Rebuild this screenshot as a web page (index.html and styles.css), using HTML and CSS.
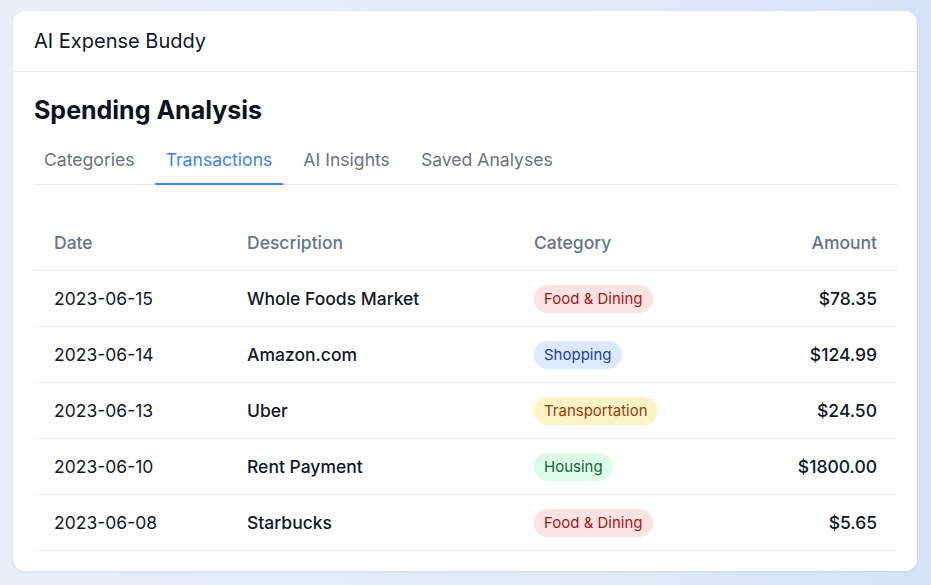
FILE: index.html
```html
<!DOCTYPE html>
<html lang="en">
<head>
    <meta charset="UTF-8">
    <title>AI Expense Buddy</title>
    <link rel="stylesheet" href="styles.css">
</head>
<body>
<div class="card">
    <div class="card-header">AI Expense Buddy</div>
    <div class="card-body">
        <h1 class="title">Spending Analysis</h1>
        <div class="tabs">
            <div class="tab">Categories</div>
            <div class="tab active">Transactions</div>
            <div class="tab">AI Insights</div>
            <div class="tab">Saved Analyses</div>
        </div>
        <table class="tx-table">
            <thead>
            <tr>
                <th class="col-date">Date</th>
                <th class="col-desc">Description</th>
                <th class="col-cat">Category</th>
                <th class="amount">Amount</th>
            </tr>
            </thead>
            <tbody>
            <tr>
                <td>2023-06-15</td>
                <td class="desc">Whole Foods Market</td>
                <td><span class="badge food">Food &amp; Dining</span></td>
                <td class="amount">$78.35</td>
            </tr>
            <tr>
                <td>2023-06-14</td>
                <td class="desc">Amazon.com</td>
                <td><span class="badge shopping">Shopping</span></td>
                <td class="amount">$124.99</td>
            </tr>
            <tr>
                <td>2023-06-13</td>
                <td class="desc">Uber</td>
                <td><span class="badge transport">Transportation</span></td>
                <td class="amount">$24.50</td>
            </tr>
            <tr>
                <td>2023-06-10</td>
                <td class="desc">Rent Payment</td>
                <td><span class="badge housing">Housing</span></td>
                <td class="amount">$1800.00</td>
            </tr>
            <tr>
                <td>2023-06-08</td>
                <td class="desc">Starbucks</td>
                <td><span class="badge food">Food &amp; Dining</span></td>
                <td class="amount">$5.65</td>
            </tr>
            </tbody>
        </table>
    </div>
</div>
</body>
</html>
```

FILE: styles.css
```css
* {
    box-sizing: border-box;
}
body {
    margin: 0;
    height: 585px;
    padding: 11px 14px 14px 13px;
    font-family: Inter, "Noto Sans", sans-serif;
    color: #111827;
    background: linear-gradient(90deg, #e9eef8 0%, #e3eaf8 60%, #d6e2fa 100%);
}
.card {
    background: #fff;
    border-radius: 12px;
    box-shadow: 0 1px 3px rgba(30, 50, 90, 0.08);
    height: 560px;
}
.card-header {
    height: 61px;
    padding: 0 21px;
    display: flex;
    align-items: center;
    font-size: 20px;
    border-bottom: 1px solid #e5e7eb;
    color: #0f172a;
}
.card-body {
    padding: 22px 20px 0 21px;
}
.title {
    margin: 0;
    font-size: 25px;
    font-weight: 700;
    line-height: 32px;
    color: #0b1220;
}
.tabs {
    display: flex;
    gap: 9px;
    margin: 12px 0 0 -1px;
    border-bottom: 1px solid #e5e7eb;
}
.tab {
    padding: 9px 11px 10px;
    margin-bottom: -1px;
    font-size: 17.6px;
    line-height: 26px;
    color: #6b7280;
    border-bottom: 2px solid transparent;
}
.tab.active {
    color: #3b82f6;
    border-bottom-color: #4a86e0;
}
.tx-table {
    width: 100%;
    border-collapse: collapse;
    margin-top: 29px;
    font-size: 17.5px;
}
.tx-table tr {
    height: 56px;
}
.tx-table th {
    text-align: left;
    font-weight: 500;
    color: #64748b;
    padding: 2px 20px 0;
    vertical-align: middle;
    border-bottom: 1px solid #e5e7eb;
}
.tx-table td {
    padding: 0 20px;
    vertical-align: middle;
    border-bottom: 1px solid #f0f1f4;
    color: #111827;
}
.col-date {
    width: 193px;
}
.col-desc {
    width: 287px;
}
.tx-table .desc {
    font-weight: 500;
}
.tx-table .amount {
    text-align: right;
    font-weight: 500;
}
.tx-table th.amount {
    color: #64748b;
}
.badge {
    display: inline-block;
    vertical-align: middle;
    margin-top: 2px;
    padding: 4px 10px;
    border-radius: 14px;
    font-size: 15px;
    line-height: 20px;
}
.food {
    background: #fee2e2;
    color: #991b1b;
}
.shopping {
    background: #dbeafe;
    color: #1e40af;
}
.transport {
    background: #fef3c7;
    color: #92400e;
}
.housing {
    background: #dcfce7;
    color: #166534;
}
```
